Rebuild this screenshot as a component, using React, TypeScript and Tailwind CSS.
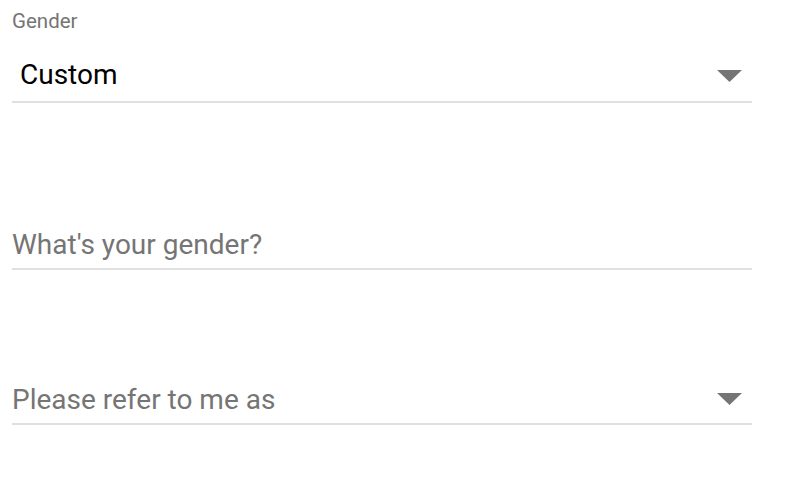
import React from "react";

function Caret() {
  return (
    <svg width="25" height="12" viewBox="0 0 25 12" className="shrink-0">
      <path d="M0 0 L25 0 L12.5 12 Z" fill="#757575" />
    </svg>
  );
}

export default function App() {
  return (
    <div className="w-[794px] h-[496px] bg-white px-3 font-['Roboto',sans-serif]">
      <div className="w-[740px] flex flex-col">
        <div className="pt-[9px] text-[20.5px] leading-[24px] text-[#757575]">Gender</div>
        <div className="h-[70px] flex items-start justify-between border-b-2 border-[#e0e0e0] pl-2 pr-[10px]">
          <span className="mt-[26px] text-[28px] leading-[32px] text-black">Custom</span>
          <div className="mt-[37px]"><Caret /></div>
        </div>
        <div className="h-[167px] flex items-end border-b-2 border-[#e0e0e0]">
          <span className="text-[28px] leading-[32px] text-[#757575] pb-[7px]">What's your gender?</span>
        </div>
        <div className="h-[155px] flex items-end justify-between border-b-2 border-[#e0e0e0] pr-[10px]">
          <span className="text-[28px] leading-[32px] text-[#757575] pb-[7px]">Please refer to me as</span>
          <div className="pb-[18px]"><Caret /></div>
        </div>
      </div>
    </div>
  );
}
